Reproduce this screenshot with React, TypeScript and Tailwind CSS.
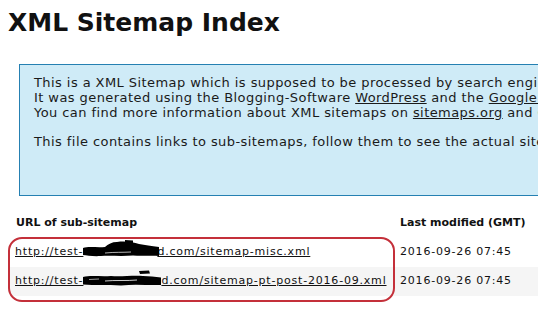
import React from "react";

function Blob1() {
  return (
    <span className="relative inline-block w-[74px] h-[10px]">
      <svg className="absolute left-[-2px] top-[-6px]" width="80" height="20" viewBox="0 0 80 20">
        <path d="M2,9 C8,7 16,9 24,8 C27,5 31,3 36,3 C44,2 52,3 58,5 C64,6 70,7 78,8 L78,17 C70,16 62,17.5 52,16.5 C42,17.5 30,16.5 20,17 C12,17.5 6,16.5 2,16 Z" fill="#000" />
        <path d="M44,1 L52,1.5 L52,4 L44,4 Z" fill="#000" />
        <path d="M24,14 C34,13 42,13.5 50,13" stroke="#fff" strokeWidth="0.7" fill="none" />
      </svg>
    </span>
  );
}

function Blob2() {
  return (
    <span className="relative inline-block w-[78px] h-[10px]">
      <svg className="absolute left-[-4px] top-[-6px]" width="84" height="20" viewBox="0 0 84 20">
        <path d="M4,9 C12,7 22,9 32,8 C42,9 54,7 64,8 C70,8 76,9 82,9.5 L82,17 C70,17.5 56,16 42,17.5 C28,16.5 16,17.5 4,16.5 Z" fill="#000" />
        <path d="M60,3 L70,2.5 L71,5.5 L61,6 Z" fill="#000" />
        <path d="M26,13 C36,12 48,13 58,12" stroke="#fff" strokeWidth="0.8" fill="none" />
        <path d="M10,11.5 L20,11" stroke="#fff" strokeWidth="0.6" fill="none" />
      </svg>
    </span>
  );
}

export default function App() {
  return (
    <div className="relative w-[538px] h-[311px] overflow-hidden bg-white text-[#111] font-['DejaVu_Sans',sans-serif]">
      <h1 className="pl-2 pt-[10px] text-[25px] leading-[25px] font-bold whitespace-nowrap">
        XML Sitemap Index
      </h1>

      <div className="ml-[19px] mt-[29px] w-[600px] h-[132px] border border-[#2580B2] bg-[#CFEBF7] pl-[14px] pt-[10px] text-[13px] leading-[15px] tracking-[0.43px] whitespace-nowrap text-[#1a1a1a]">
        <div>
          <div>This is a XML Sitemap which is supposed to be processed by search engines which follow the XML Sitemap standard.</div>
          <div>
            It was generated using the Blogging-Software <span className="underline">WordPress</span> and the{" "}
            <span className="underline">Google Sitemap Generator Plugin</span> by Arne Brachhold.
          </div>
          <div>
            You can find more information about XML sitemaps on <span className="underline">sitemaps.org</span> and Google's list of sitemap programs.
          </div>
        </div>
        <div className="mt-[14px]">
          This file contains links to sub-sitemaps, follow them to see the actual sitemap content.
        </div>
      </div>

      <div className="mt-[13px] ml-[10px] w-[528px] text-[11px] tracking-[0.8px] whitespace-nowrap">
        <div className="flex h-[29px] items-center font-bold tracking-[0px]">
          <div className="w-[390px] pl-[6px]">URL of sub-sitemap</div>
          <div>Last modified (GMT)</div>
        </div>
        <div className="flex h-[29px] items-center">
          <div className="w-[390px] pl-[5px]">
            <span className="underline">http://test-</span>
            <Blob1 />
            <span className="underline">d.com/sitemap-misc.xml</span>
          </div>
          <div>2016-09-26 07:45</div>
        </div>
        <div className="flex h-[29px] items-center bg-[#f5f5f5]">
          <div className="w-[390px] pl-[5px]">
            <span className="underline">http://test-</span>
            <Blob2 />
            <span className="underline">d.com/sitemap-pt-post-2016-09.xml</span>
          </div>
          <div>2016-09-26 07:45</div>
        </div>
      </div>

      <div className="absolute left-[8px] top-[237px] w-[387px] h-[65px] rounded-[14px] border-2 border-[#c4303a]" />
    </div>
  );
}
